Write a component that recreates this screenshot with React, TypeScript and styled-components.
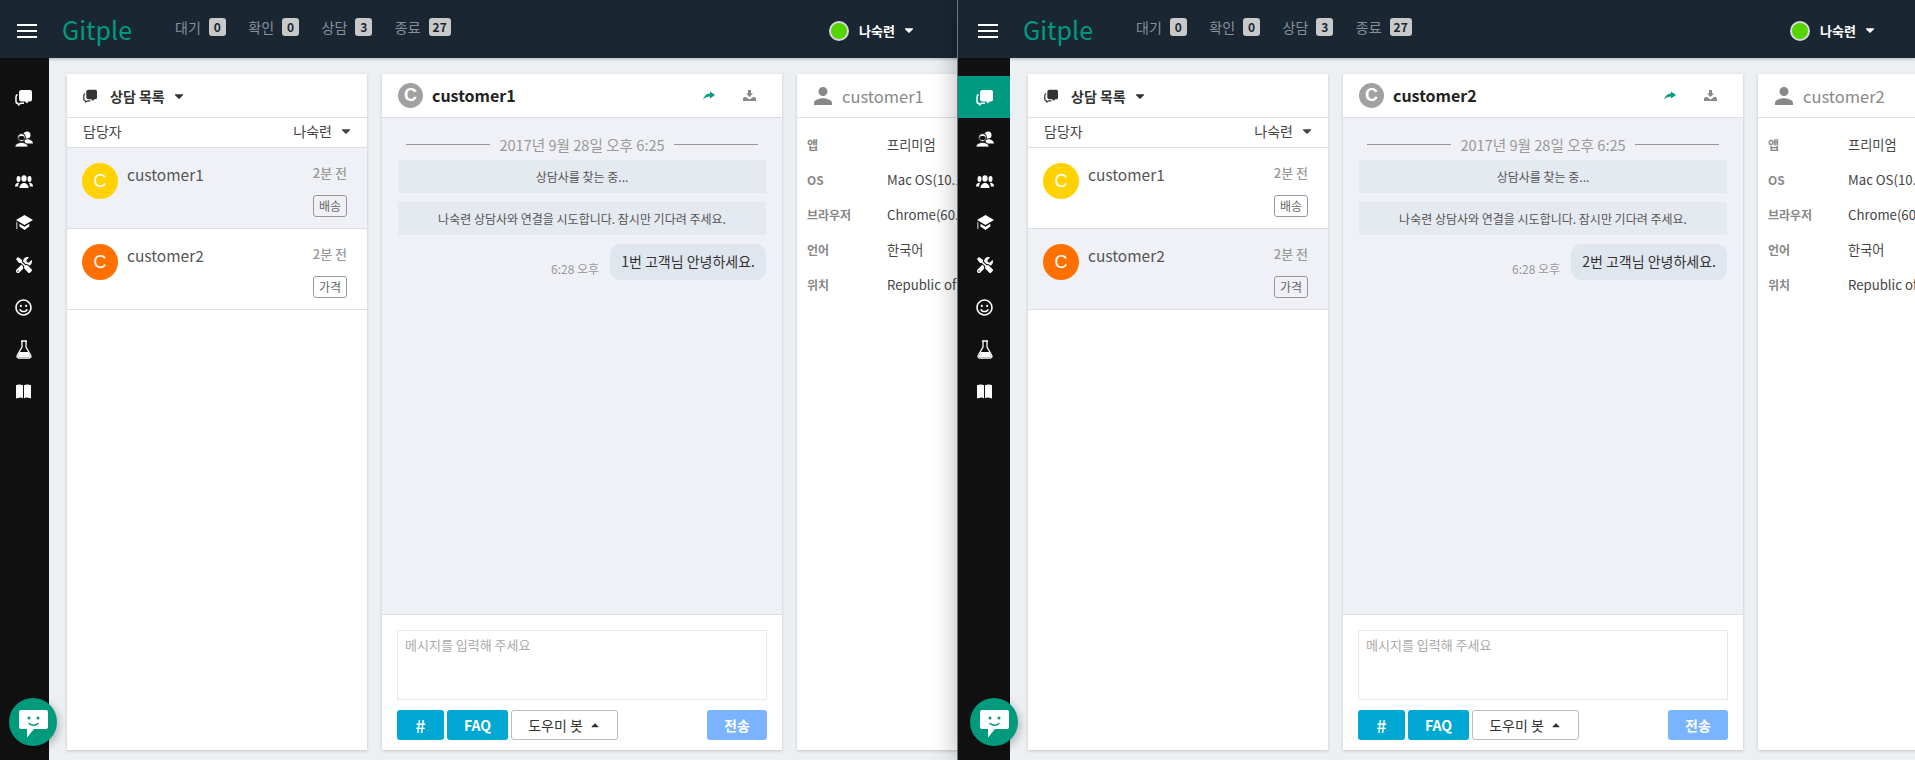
import { Fragment } from "react";
import styled, { createGlobalStyle } from "styled-components";
import { FaCaretDown, FaCaretUp, FaRegSmile, FaTools } from "react-icons/fa";
import { IoMdPerson } from "react-icons/io";

const GlobalStyle = createGlobalStyle`
  html, body {
    margin: 0;
    padding: 0;
    background: #ecf0f3;
    font-family: "Noto Sans CJK KR", "Noto Sans", sans-serif;
  }
  * { box-sizing: border-box; }
`;

const Page = styled.div`
  display: flex;
  width: 1915px;
  height: 760px;
  overflow: hidden;
`;

const Screen = styled.div<{ $right?: boolean }>`
  position: relative;
  flex: none;
  width: ${(p) => (p.$right ? "958px" : "957px")};
  height: 760px;
  ${(p) =>
    p.$right
      ? `
    border-left: 1px solid #6d7680;
    box-shadow: -6px 0 20px rgba(0, 0, 0, 0.2);
    z-index: 2;
  `
      : `overflow: hidden;`}
`;

const Shell = styled.div<{ $right?: boolean }>`
  position: relative;
  width: ${(p) => (p.$right ? "957px" : "960px")};
  height: 760px;
  margin-left: ${(p) => (p.$right ? "0" : "-3px")};
  background: #ecf0f3;
  overflow: hidden;
`;

const TopBar = styled.header`
  position: relative;
  z-index: 2;
  display: flex;
  align-items: center;
  height: 58px;
  padding-left: 20px;
  background: #1a2733;
  box-shadow: 0 1px 3px rgba(0, 0, 0, 0.25);
`;

const Burger = styled.div`
  display: flex;
  flex-direction: column;
  gap: 4px;
  width: 20px;
  margin-top: 4px;
  span {
    height: 2px;
    background: #fff;
  }
`;

const Logo = styled.div`
  margin-left: 25px;
  width: 113px;
  color: #009a83;
  font-size: 25px;
  line-height: 58px;
`;

const Stat = styled.div`
  display: flex;
  align-items: center;
  gap: 8px;
  margin-right: 22.5px;
  margin-top: -5px;
  color: #87919b;
  font-size: 14px;
`;

const Badge = styled.span`
  min-width: 17px;
  padding: 0 4px;
  height: 18px;
  border-radius: 3px;
  background: #c9c9c9;
  color: #1a2733;
  font-size: 12px;
  font-weight: 700;
  line-height: 18px;
  text-align: center;
`;

const User = styled.div`
  position: absolute;
  left: 832px;
  top: 19px;
  display: flex;
  align-items: center;
  color: #fff;
  font-size: 13px;
  font-weight: 700;
`;

const Dot = styled.span`
  width: 20px;
  height: 20px;
  margin-top: 2px;
  margin-right: 10px;
  border-radius: 50%;
  background: #55d400;
  border: 2px solid #d5dadd;
`;

const Body = styled.div`
  display: flex;
  height: 702px;
`;

const Sidebar = styled.nav`
  flex: none;
  width: 52px;
  padding-top: 18px;
  background: #111;
`;

const NavItem = styled.div<{ $active?: boolean }>`
  display: flex;
  align-items: center;
  justify-content: center;
  height: 42px;
  padding-left: 1px;
  color: #fff;
  background: ${(p) => (p.$active ? "#009a83" : "transparent")};
`;

const Content = styled.main`
  display: flex;
  gap: 15px;
  flex: 1;
  min-width: 0;
  padding: 16px 0 10px 18px;
`;

const Panel = styled.section<{ $width: number }>`
  display: flex;
  flex-direction: column;
  flex: none;
  width: ${(p) => p.$width}px;
  background: #fff;
  box-shadow: 0 1px 3px rgba(0, 0, 0, 0.18);
`;

const PanelHead = styled.div`
  display: flex;
  align-items: center;
  flex: none;
  height: 44px;
  border-bottom: 1px solid #dcdfe2;
`;

const ListHead = styled(PanelHead)`
  padding: 1px 0 0 16px;
  color: #333;
  font-size: 14px;
  font-weight: 700;
  svg { flex: none; }
`;

const ListTitle = styled.span`
  margin-left: 13px;
`;

const Caret = styled(FaCaretDown)`
  margin-left: 7px;
  font-size: 14px;
`;

const AssignRow = styled.div`
  display: flex;
  align-items: center;
  justify-content: space-between;
  height: 30px;
  padding: 0 14px 3px 16px;
  border-bottom: 1px solid #dcdfe2;
  color: #444;
  font-size: 14px;
`;

const AssignValue = styled.span`
  display: flex;
  align-items: center;
`;

const Item = styled.div<{ $active?: boolean }>`
  display: flex;
  height: 81px;
  padding: 15px 20px 0 15px;
  border-bottom: 1px solid #dcdfe2;
  background: ${(p) => (p.$active ? "#eff1f6" : "#fff")};
`;

const Avatar = styled.div<{ $color: string }>`
  flex: none;
  width: 36px;
  height: 36px;
  border-radius: 50%;
  background: ${(p) => p.$color};
  color: #fff;
  font-family: "Liberation Sans", sans-serif;
  font-size: 18px;
  line-height: 36px;
  text-align: center;
`;

const ItemName = styled.div`
  flex: 1;
  margin-left: 9px;
  color: #555;
  font-size: 15.5px;
  line-height: 22px;
`;

const ItemMeta = styled.div`
  display: flex;
  flex-direction: column;
  align-items: flex-end;
  gap: 13px;
`;

const Ago = styled.span`
  color: #999;
  font-size: 13px;
  font-weight: 500;
  line-height: 19px;
`;

const Tag = styled.span`
  height: 22px;
  width: 34px;
  border: 1px solid #999;
  border-radius: 3px;
  color: #666;
  font-size: 12px;
  line-height: 20px;
  text-align: center;
`;

const ChatHead = styled(PanelHead)`
  padding: 0 26px 0 16px;
`;

const HeadAvatar = styled.div`
  flex: none;
  width: 25px;
  height: 25px;
  border-radius: 50%;
  background: #a1a1a1;
  color: #fff;
  font-family: "Liberation Sans", sans-serif;
  font-size: 18px;
  font-weight: 700;
  line-height: 25px;
  text-align: center;
`;

const ChatName = styled.div`
  flex: 1;
  margin-left: 9px;
  margin-bottom: 2px;
  color: #222;
  font-size: 16px;
  font-weight: 700;
`;

const HeadAction = styled.span<{ $color: string }>`
  display: flex;
  margin-left: 28px;
  color: ${(p) => p.$color};
`;

const ChatBody = styled.div`
  flex: 1;
  padding: 16px 16px 0;
  background: #eff1f6;
`;

const DateLine = styled.div`
  display: flex;
  align-items: center;
  gap: 9px;
  height: 20px;
  padding: 0 8px;
  margin-bottom: 6px;
  color: #999;
  font-size: 14.6px;
  white-space: nowrap;
  &::before,
  &::after {
    content: "";
    flex: 1;
    height: 1px;
    background: #999;
  }
`;

const SystemMsg = styled.div`
  height: 33px;
  margin-bottom: 9px;
  background: #e5e9f0;
  color: #555;
  font-size: 12px;
  line-height: 33px;
  text-align: center;
`;

const BubbleRow = styled.div`
  display: flex;
  align-items: flex-end;
  justify-content: flex-end;
  gap: 11px;
`;

const SentAt = styled.span`
  margin-bottom: 3px;
  color: #999;
  font-size: 12px;
`;

const Bubble = styled.div`
  height: 36px;
  padding: 0 11px;
  border-radius: 10px;
  background: #e0e6ee;
  color: #333;
  font-size: 14px;
  line-height: 35px;
`;

const Composer = styled.div`
  flex: none;
  height: 136px;
  padding: 15px 15px 0;
  border-top: 1px solid #dcdfe2;
`;

const Input = styled.textarea`
  display: block;
  width: 100%;
  height: 70px;
  padding: 4px 7px;
  border: 1px solid #e8e8e8;
  outline: none;
  resize: none;
  font-family: inherit;
  font-size: 13px;
  &::placeholder {
    color: #aaa;
  }
`;

const Actions = styled.div`
  display: flex;
  gap: 3px;
  margin-top: 10px;
`;

const Btn = styled.button<{ $width: number }>`
  width: ${(p) => p.$width}px;
  height: 30px;
  padding: 0;
  border: none;
  border-radius: 3px;
  background: #00a7d3;
  color: #fff;
  font-family: inherit;
  font-size: 14px;
  font-weight: 700;
`;

const HashBtn = styled(Btn)`
  font-size: 18px;
  font-weight: 500;
`;

const HelperBtn = styled.button`
  display: flex;
  align-items: center;
  justify-content: center;
  gap: 6px;
  width: 107px;
  height: 30px;
  padding: 0;
  border: 1px solid #bbb;
  border-radius: 3px;
  background: #fff;
  color: #333;
  font-family: inherit;
  font-size: 14px;
`;

const SendBtn = styled(Btn)`
  margin-left: auto;
  background: #7ab3ff;
`;

const ProfileHead = styled(PanelHead)`
  padding-left: 14px;
  color: #888;
  font-size: 16.5px;
`;

const ProfileName = styled.span`
  margin-left: 7px;
`;

const ProfileRows = styled.div`
  display: grid;
  grid-template-columns: 80px 1fr;
  grid-auto-rows: 35px;
  align-items: center;
  padding: 9px 10px;
  font-size: 13.2px;
`;

const ProfileLabel = styled.span`
  color: #888;
  font-size: 12px;
  font-weight: 700;
`;

const ProfileValue = styled.span`
  color: #444;
  white-space: nowrap;
`;

const Fab = styled.div`
  position: absolute;
  left: 12px;
  top: 698px;
  z-index: 3;
  display: flex;
  align-items: center;
  justify-content: center;
  width: 48px;
  height: 48px;
  padding-top: 4px;
  border-radius: 50%;
  background: #009a7d;
  box-shadow: 2px 3px 8px rgba(0, 0, 0, 0.25);
`;

const ChatsIcon = ({ size = 17 }: { size?: number }) => (
  <svg width={size} height={size} viewBox="0 0 17 17" fill="currentColor">
    <path d="M6.500 1H15a2 2 0 0 1 2 2v7.500a2 2 0 0 1-2 2h-1.500l-1.500 2-2-2H6.500a2.500 2.500 0 0 1-2.500-2.500V3.500A2.500 2.500 0 0 1 6.500 1z" />
    <path d="M2.500 5.500C1.500 6 1 7 1 8v4.500c0 1 .6 1.800 1.800 1.800l.7 1.500 2-1.500H9" fill="none" stroke="currentColor" strokeWidth="1.500" />
  </svg>
);

const FriendsIcon = () => (
  <svg width="18" height="16" viewBox="0 0 18 16" fill="currentColor">
    <circle cx="12" cy="4" r="3.500" />
    <path d="M9 9.500c2-1.500 5-1.500 6.500-.5 1.500.8 2.500 2 2.500 3.500h-7z" />
    <circle cx="6.500" cy="6.500" r="4" stroke="#111" strokeWidth="1" />
    <path d="M0 16c0-3 3-4.500 6.500-4.500S13 13 13 16z" stroke="#111" strokeWidth=".8" />
    <path d="M3.500 6.200c1-1.500 5-1.500 6 0v2c-1 1-5 1-6 0z" fill="#111" />
  </svg>
);

const TeamIcon = () => (
  <svg width="18" height="13" viewBox="0 0 18 13" fill="currentColor">
    <ellipse cx="9" cy="3.500" rx="2.600" ry="3.300" />
    <path d="M4.500 13c0-3.500 2.500-5 4.500-5s4.500 1.500 4.500 5z" />
    <ellipse cx="3.500" cy="4" rx="2" ry="3" />
    <path d="M0 11.500C0 9 1.500 7.800 3.500 7.800l.5.200c-.5 1-.8 2-.8 3.500z" />
    <ellipse cx="14.500" cy="4" rx="2" ry="3" />
    <path d="M18 11.500C18 9 16.500 7.800 14.500 7.800l-.5.200c.5 1 .8 2 .8 3.500z" />
  </svg>
);

const CapIcon = () => (
  <svg width="18" height="16" viewBox="0 0 18 16" fill="currentColor">
    <path d="M9.500 0L18 5l-8.500 5L1 5z" />
    <path d="M4.500 8.800l5 3 4.800-3v2.700L9.500 15l-5-3.500z" />
    <path d="M1 6.500l1.500.9V14H1z" fill="#999" />
  </svg>
);

const BookIcon = () => (
  <svg width="15" height="15" viewBox="0 0 15 15" fill="currentColor">
    <path d="M0 1.200C2 .2 5 .2 7 1.200V14.500c-1-1-2-1.200-3.500-.7S1 14 0 14.500z" />
    <path d="M15 1.200c-2-1-5-1-7 0V14.500c1-1 2-1.200 3.500-.7s2.500.2 3.500.7z" />
  </svg>
);

const FlaskIcon = () => (
  <svg width="16" height="19" viewBox="0 0 16 19" fill="none" stroke="currentColor" strokeWidth="1.300">
    <path d="M5 1h6M6 1v6L1.200 15.500C.6 16.800 1.300 18 2.800 18h10.400c1.500 0 2.200-1.200 1.600-2.500L10 7V1" />
    <path d="M3.500 12h9l2 5H1.500z" fill="currentColor" stroke="none" />
  </svg>
);

const ShareIcon = () => (
  <svg width="12" height="9" viewBox="0 0 12 9" fill="currentColor">
    <path d="M7 .5L12 4 7 7.500V5.500C4 5.500 2 6.500 0 8.800 1 5 3.500 2.700 7 2.500z" />
  </svg>
);

const DownloadIcon = () => (
  <svg width="13" height="11" viewBox="0 0 13 11" fill="currentColor">
    <path d="M5 0h3v3.500h2L6.500 7 3 3.500h2z" />
    <path d="M0 9c0-1.200.8-2 2-2h.8l3.700 2.500L10.200 7h.8c1.200 0 2 .8 2 2v2H0z" />
  </svg>
);

const BotIcon = () => (
  <svg width="29" height="28" viewBox="0 0 29 28">
    <path d="M2 0h25a2 2 0 0 1 2 2v15a2 2 0 0 1-2 2H15l-7 8.500V19H2a2 2 0 0 1-2-2V2a2 2 0 0 1 2-2z" fill="#fff" />
    <circle cx="10" cy="8" r="1.500" fill="#009a7d" />
    <circle cx="19" cy="8" r="1.500" fill="#009a7d" />
    <path d="M10 13.500c2.500 2.200 6.500 2.200 9 0" fill="none" stroke="#009a7d" strokeWidth="1.500" strokeLinecap="round" />
  </svg>
);

const stats = [
  { label: "대기", count: 0 },
  { label: "확인", count: 0 },
  { label: "상담", count: 3 },
  { label: "종료", count: 27 },
];

const navIcons = [
  <ChatsIcon key="chats" />,
  <FriendsIcon key="friends" />,
  <TeamIcon key="team" />,
  <CapIcon key="cap" />,
  <FaTools key="tools" size={16} />,
  <FaRegSmile key="smile" size={17} />,
  <FlaskIcon key="flask" />,
  <BookIcon key="book" />,
];

const customers = [
  { name: "customer1", color: "#ffd200", tag: "배송" },
  { name: "customer2", color: "#ff7000", tag: "가격" },
];

const profile = [
  ["앱", "프리미엄"],
  ["OS", "Mac OS(10.12.6)"],
  ["브라우저", "Chrome(60.0)"],
  ["언어", "한국어"],
  ["위치", "Republic of Korea"],
];

function Agent({ index, right }: { index: number; right?: boolean }) {
  const current = customers[index];
  return (
    <Screen $right={right}>
      <Shell $right={right}>
        <TopBar>
          <Burger>
            <span />
            <span />
            <span />
          </Burger>
          <Logo>Gitple</Logo>
          {stats.map((s) => (
            <Stat key={s.label}>
              {s.label}
              <Badge>{s.count}</Badge>
            </Stat>
          ))}
          <User>
            <Dot />
            나숙련
            <Caret />
          </User>
        </TopBar>
        <Body>
          <Sidebar>
            {navIcons.map((icon, i) => (
              <NavItem key={i} $active={right && i === 0}>
                {icon}
              </NavItem>
            ))}
          </Sidebar>
          <Content>
            <Panel $width={300}>
              <ListHead>
                <ChatsIcon size={14} />
                <ListTitle>상담 목록</ListTitle>
                <Caret />
              </ListHead>
              <AssignRow>
                담당자
                <AssignValue>
                  나숙련
                  <Caret />
                </AssignValue>
              </AssignRow>
              {customers.map((c, i) => (
                <Item key={c.name} $active={i === index}>
                  <Avatar $color={c.color}>C</Avatar>
                  <ItemName>{c.name}</ItemName>
                  <ItemMeta>
                    <Ago>2분 전</Ago>
                    <Tag>{c.tag}</Tag>
                  </ItemMeta>
                </Item>
              ))}
            </Panel>
            <Panel $width={400}>
              <ChatHead>
                <HeadAvatar>C</HeadAvatar>
                <ChatName>{current.name}</ChatName>
                <HeadAction $color="#009a83">
                  <ShareIcon />
                </HeadAction>
                <HeadAction $color="#888">
                  <DownloadIcon />
                </HeadAction>
              </ChatHead>
              <ChatBody>
                <DateLine>2017년 9월 28일 오후 6:25</DateLine>
                <SystemMsg>상담사를 찾는 중...</SystemMsg>
                <SystemMsg>나숙련 상담사와 연결을 시도합니다. 잠시만 기다려 주세요.</SystemMsg>
                <BubbleRow>
                  <SentAt>6:28 오후</SentAt>
                  <Bubble>{index + 1}번 고객님 안녕하세요.</Bubble>
                </BubbleRow>
              </ChatBody>
              <Composer>
                <Input placeholder="메시지를 입력해 주세요" />
                <Actions>
                  <HashBtn $width={47}>#</HashBtn>
                  <Btn $width={61}>FAQ</Btn>
                  <HelperBtn>
                    도우미 봇
                    <FaCaretUp size={12} />
                  </HelperBtn>
                  <SendBtn $width={60}>전송</SendBtn>
                </Actions>
              </Composer>
            </Panel>
            <Panel $width={300}>
              <ProfileHead>
                <IoMdPerson size={24} />
                <ProfileName>{current.name}</ProfileName>
              </ProfileHead>
              <ProfileRows>
                {profile.map(([label, value]) => (
                  <Fragment key={label}>
                    <ProfileLabel>{label}</ProfileLabel>
                    <ProfileValue>{value}</ProfileValue>
                  </Fragment>
                ))}
              </ProfileRows>
            </Panel>
          </Content>
        </Body>
        <Fab>
          <BotIcon />
        </Fab>
      </Shell>
    </Screen>
  );
}

export default function App() {
  return (
    <Page>
      <GlobalStyle />
      <Agent index={0} />
      <Agent index={1} right />
    </Page>
  );
}
